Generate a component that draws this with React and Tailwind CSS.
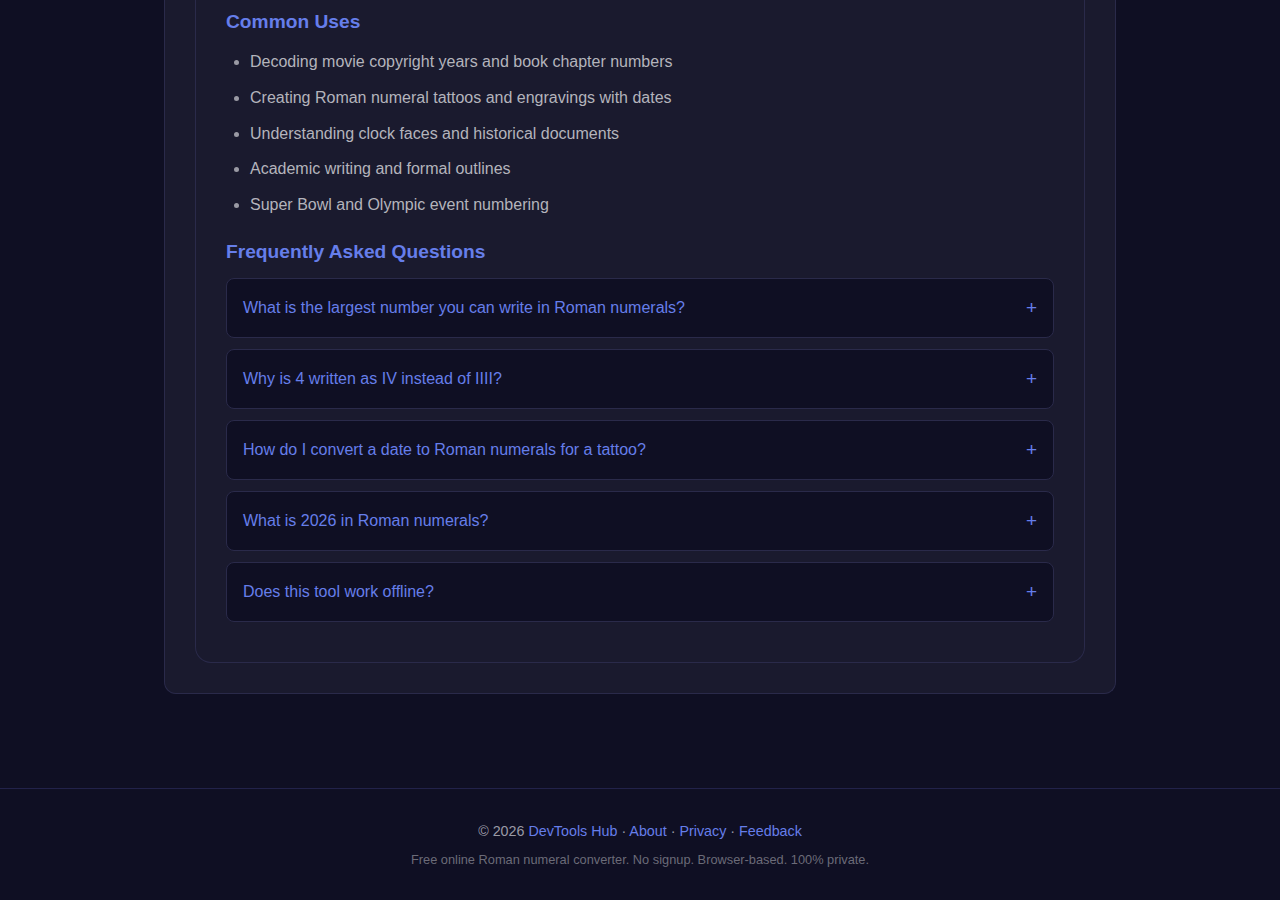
import React from "react";

const uses = [
  "Decoding movie copyright years and book chapter numbers",
  "Creating Roman numeral tattoos and engravings with dates",
  "Understanding clock faces and historical documents",
  "Academic writing and formal outlines",
  "Super Bowl and Olympic event numbering",
];

const faqs = [
  "What is the largest number you can write in Roman numerals?",
  "Why is 4 written as IV instead of IIII?",
  "How do I convert a date to Roman numerals for a tattoo?",
  "What is 2026 in Roman numerals?",
  "Does this tool work offline?",
];

function FaqItem({ q }) {
  return (
    <div className="h-[60px] rounded-lg border border-[#2a2a4a] bg-[#0f0f23] px-4 flex items-center justify-between cursor-pointer">
      <span className="text-[16px] text-[#667eea]">{q}</span>
      <span className="text-[19px] leading-none text-[#667eea] font-light">+</span>
    </div>
  );
}

export default function App() {
  return (
    <div
      className="min-h-[900px] bg-[#0f0f23] flex flex-col"
      style={{ fontFamily: '"Liberation Sans", Arial, sans-serif' }}
    >
      <main className="w-[952px] mx-auto">
        <section className="bg-[#1a1a2e] border border-t-0 border-[#2a2a4a] rounded-b-xl px-[30px] pb-[30px]">
          <div className="bg-[#1a1a2e] border border-t-0 border-[#2a2a4a] rounded-b-2xl px-[30px] pb-[30px]">
            <h3 className="text-[19.2px] leading-[23px] font-bold text-[#667eea] pt-[10px] mb-4">
              Common Uses
            </h3>
            <ul className="list-disc pl-6 text-[16px] leading-[25.6px] text-[#b4b4bc] marker:text-[#9a9aa4]">
              {uses.map((u) => (
                <li key={u} className="mb-[10.2px]">
                  {u}
                </li>
              ))}
            </ul>
            <h3 className="text-[19.2px] leading-[23px] font-bold text-[#667eea] mt-[22px] mb-[15px]">
              Frequently Asked Questions
            </h3>
            <div className="flex flex-col gap-[11px] mb-[10px]">
              {faqs.map((q) => (
                <FaqItem key={q} q={q} />
              ))}
            </div>
          </div>
        </section>
      </main>

      <footer className="mt-[94px] border-t border-[#22224a] pt-[32px] pb-6 text-center">
        <p className="text-[14.3px] leading-[20px] text-[#9a9aa6]">
          © 2026 <a className="text-[#667eea]">DevTools Hub</a> ·{" "}
          <a className="text-[#667eea]">About</a> ·{" "}
          <a className="text-[#667eea]">Privacy</a> ·{" "}
          <a className="text-[#667eea]">Feedback</a>
        </p>
        <p className="mt-[10px] text-[12.8px] leading-[18px] text-[#6b6b78]">
          Free online Roman numeral converter. No signup. Browser-based. 100% private.
        </p>
      </footer>
    </div>
  );
}
